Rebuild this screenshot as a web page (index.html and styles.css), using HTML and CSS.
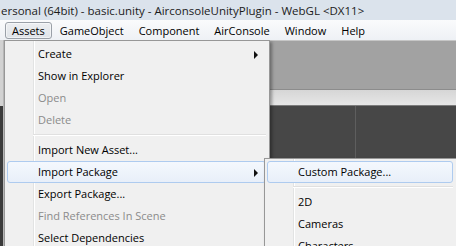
FILE: index.html
```html
<!DOCTYPE html>
<html>
<head>
<meta charset="utf-8">
<link rel="stylesheet" href="styles.css">
</head>
<body>
<div class="window">
  <div class="titlebar">ersonal (64bit) - basic.unity - AirconsoleUnityPlugin - WebGL &lt;DX11&gt;</div>
  <div class="menubar">
    <span class="mb-item active">Assets</span>
    <span class="mb-item">GameObject</span>
    <span class="mb-item">Component</span>
    <span class="mb-item">AirConsole</span>
    <span class="mb-item">Window</span>
    <span class="mb-item">Help</span>
  </div>
  <div class="workspace">
    <div class="side"></div>
    <div class="editor">
      <div class="panel-top"></div>
      <div class="strip"></div>
      <div class="panes"><div class="pane left"></div><div class="pane right"></div></div>
    </div>
    <ul class="menu main">
      <li class="item has-sub">Create</li>
      <li class="item">Show in Explorer</li>
      <li class="item disabled">Open</li>
      <li class="item disabled">Delete</li>
      <li class="sep"></li>
      <li class="item">Import New Asset...</li>
      <li class="item has-sub hot">Import Package</li>
      <li class="item">Export Package...</li>
      <li class="item disabled">Find References In Scene</li>
      <li class="item">Select Dependencies</li>
    </ul>
    <ul class="menu sub">
      <li class="item hot">Custom Package...</li>
      <li class="sep"></li>
      <li class="item">2D</li>
      <li class="item">Cameras</li>
      <li class="item">Characters</li>
    </ul>
  </div>
</div>
</body>
</html>
```
FILE: styles.css
```css
* { box-sizing: border-box; }
html, body { margin: 0; padding: 0; }
body {
  width: 456px;
  height: 246px;
  overflow: hidden;
  font-family: "Open Sans", "Noto Sans", sans-serif;
  font-size: 11px;
  color: #000;
}
.window {
  display: grid;
  grid-template-rows: 20px 20px 206px;
  height: 246px;
}
.titlebar {
  background: #dbe3ec;
  padding-left: 1px;
  padding-top: 2px;
  font-size: 11.5px;
  line-height: 17px;
  color: #1b1b1b;
  white-space: nowrap;
}
.menubar {
  display: flex;
  align-items: center;
  padding-left: 5px;
  gap: 1px;
  background: linear-gradient(#fafbfc, #eef1f5);
  white-space: nowrap;
}
.mb-item {
  padding: 0 6px;
  height: 17px;
  line-height: 15px;
  border: 1px solid transparent;
  border-radius: 3px;
}
.mb-item.active {
  border-color: #9aa0a8;
  background: linear-gradient(#eceef1, #dfe3e8);
  box-shadow: inset 0 0 0 1px rgba(255,255,255,.5);
}
.workspace {
  position: relative;
  display: grid;
  grid-template-columns: 4px 1fr;
  overflow: hidden;
}
.side {
  background: linear-gradient(#d2d2d2 0 66px, #3b3b3b 66px);
  border-right: 1px solid #b9b9b9;
}
.editor {
  display: grid;
  grid-template-rows: 49px 17px 1fr;
}
.panel-top {
  background: #a2a2a2;
  border-top: 1px solid #c6c6c6;
}
.strip {
  background: linear-gradient(#d6d6d6, #e6e6e6);
  border-top: 1px solid #8c8c8c;
  border-bottom: 1px solid #7c7c7c;
}
.panes {
  display: grid;
  grid-template-columns: 352px 1fr;
  background: #474747;
}
.pane.left { border-right: 1px solid #5e5e5e; }

.menu {
  position: absolute;
  margin: 0;
  list-style: none;
  border: 1px solid #979797;
  background: linear-gradient(to right, #f0f0f0 0 28px, #e2e3e3 28px 29px, #ffffff 29px 30px, #f0f0f0 30px);
  box-shadow: 2px 2px 3px rgba(0,0,0,.35);
  padding: 2px 2px 2px 2px;
}
.menu.main {
  left: 4px;
  top: 0;
  width: 266px;
  height: 230px;
  padding-right: 3px;
}
.menu.sub {
  left: 264px;
  top: 118px;
  width: 194px;
  height: 120px;
  padding-right: 4px;
}
.item {
  position: relative;
  height: 22px;
  line-height: 20px;
  padding-left: 30px;
  border: 1px solid transparent;
  border-radius: 3px;
  white-space: nowrap;
}
.item.disabled { color: #8b8b8b; }
.item.hot {
  border-color: #aecbef;
  background: linear-gradient(#f4f8fd, #e8eff9);
}
.item.has-sub::after {
  content: "";
  position: absolute;
  right: 7px;
  top: 7px;
  border-left: 4px solid #111;
  border-top: 4px solid transparent;
  border-bottom: 4px solid transparent;
}
.sep {
  height: 8px;
  margin-left: 26px;
  background: linear-gradient(transparent 3px, #e0e0e0 3px 4px, #ffffff 4px 5px, transparent 5px);
}
```
